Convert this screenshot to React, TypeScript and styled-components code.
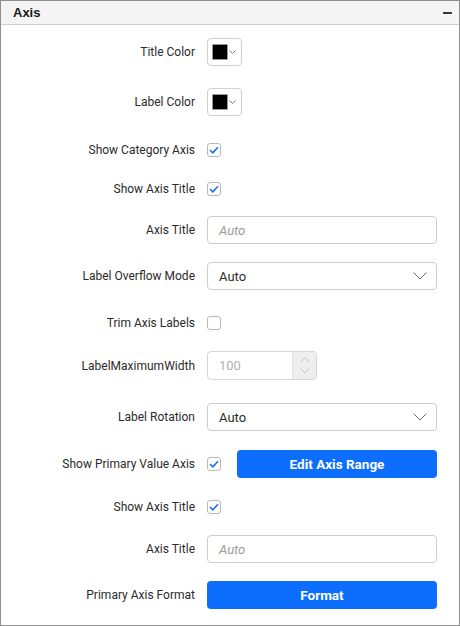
import React from "react";
import styled, { createGlobalStyle } from "styled-components";

const Global = createGlobalStyle`
  html, body { margin: 0; padding: 0; background: #ffffff; }
  * { box-sizing: border-box; }
  body { font-family: Roboto, "Noto Sans", Arial, sans-serif; }
`;

const Panel = styled.div`
  width: 460px;
  height: 626px;
  border: 1px solid #8f8f8f;
  background: #ffffff;
  display: flex;
  flex-direction: column;
  overflow: hidden;
`;

const Header = styled.div`
  height: 24px;
  flex: none;
  background: #f4f4f4;
  border-bottom: 1px solid #cdcdcd;
  display: flex;
  align-items: center;
  justify-content: space-between;
  padding: 0 7px 0 12px;
`;

const HeaderTitle = styled.span`
  font-family: "Liberation Sans", Arial, sans-serif;
  font-weight: 700;
  font-size: 13px;
  color: #1a1a1a;
`;

const Collapse = styled.span`
  width: 9px;
  height: 2px;
  background: #3a3a3a;
  margin-top: 1px;
`;

const Body = styled.div`
  display: flex;
  flex-direction: column;
`;

const Row = styled.div<{ $gap: number; $h?: number }>`
  display: flex;
  align-items: center;
  height: ${(p) => p.$h ?? 28}px;
  margin-top: ${(p) => p.$gap}px;
`;

const Label = styled.div`
  width: 194px;
  flex: none;
  text-align: right;
  font-size: 12px;
  color: #2b2b2b;
  white-space: nowrap;
`;

const Controls = styled.div`
  margin-left: 12px;
  display: flex;
  align-items: center;
  gap: 16px;
  height: 100%;
`;

const ColorBox = styled.div`
  width: 35px;
  height: 28px;
  border: 1px solid #cfcfcf;
  border-radius: 4px;
  display: flex;
  align-items: center;
  padding-left: 4px;
  gap: 1px;
`;

const Swatch = styled.div`
  width: 16px;
  height: 16px;
  background: #000000;
  border: 1px solid #9a9a9a;
  border-radius: 1px;
`;

const CheckBox = styled.div`
  width: 14px;
  height: 14px;
  border: 1px solid #b9b9b9;
  border-radius: 3px;
  display: flex;
  align-items: center;
  justify-content: center;
  background: #ffffff;
`;

const TextBox = styled.div<{ $w?: number }>`
  width: ${(p) => p.$w ?? 230}px;
  height: 28px;
  border: 1px solid #cdcdcd;
  border-radius: 4px;
  display: flex;
  align-items: center;
  padding-left: 11px;
  font-size: 13px;
`;

const SelectBox = styled(TextBox)`
  padding-right: 0;
`;

const Placeholder = styled.span`
  font-style: italic;
  color: #9a9a9a;
`;

const Value = styled.span`
  color: #2b2b2b;
  flex: 1;
`;

const DropArrow = styled.div`
  width: 30px;
  height: 100%;
  display: flex;
  align-items: center;
  justify-content: center;
  margin-right: 1px;
`;

const Numeric = styled.div`
  width: 110px;
  height: 29px;
  border: 1px solid #d6d6d6;
  border-radius: 4px;
  display: flex;
  align-items: stretch;
  overflow: hidden;
  font-size: 13px;
`;

const NumValue = styled.div`
  flex: 1;
  display: flex;
  align-items: center;
  padding-left: 11px;
  color: #b0b0b0;
`;

const Spinner = styled.div`
  width: 24px;
  background: #eeeeee;
  border-left: 1px solid #e2e2e2;
  display: flex;
  flex-direction: column;
  align-items: center;
  justify-content: center;
  gap: 5px;
`;

const PrimaryButton = styled.button<{ $w: number }>`
  width: ${(p) => p.$w}px;
  height: 28px;
  border: none;
  border-radius: 4px;
  background: #0d6efd;
  color: #ffffff;
  font-family: Roboto, Arial, sans-serif;
  font-weight: 700;
  font-size: 13.5px;
  padding: 0;
  cursor: pointer;
`;

const Chevron = ({ size = 12, color = "#6b6b6b", up = false }: { size?: number; color?: string; up?: boolean }) => (
  <svg width={size} height={size / 2 + 1} viewBox={`0 0 ${size} ${size / 2 + 1}`}>
    <polyline
      points={up ? `0.5,${size / 2 + 0.5} ${size / 2},0.5 ${size - 0.5},${size / 2 + 0.5}` : `0.5,0.5 ${size / 2},${size / 2} ${size - 0.5},0.5`}
      fill="none"
      stroke={color}
      strokeWidth="1"
    />
  </svg>
);

const Check = () => (
  <svg width="10" height="8" viewBox="0 0 10 8">
    <polyline points="1,4 3.8,6.8 9,1.2" fill="none" stroke="#1a6ef5" strokeWidth="1.6" />
  </svg>
);

const ColorPicker = () => (
  <ColorBox>
    <Swatch />
    <Chevron size={7} color="#777" />
  </ColorBox>
);

const Dropdown = ({ value }: { value: string }) => (
  <SelectBox>
    <Value>{value}</Value>
    <DropArrow>
      <Chevron size={14} color="#6e6e6e" />
    </DropArrow>
  </SelectBox>
);

export default function App() {
  return (
    <>
      <Global />
      <Panel>
        <Header>
          <HeaderTitle>Axis</HeaderTitle>
          <Collapse />
        </Header>
        <Body>
          <Row $gap={13}>
            <Label>Title Color</Label>
            <Controls><ColorPicker /></Controls>
          </Row>
          <Row $gap={22}>
            <Label>Label Color</Label>
            <Controls><ColorPicker /></Controls>
          </Row>
          <Row $gap={20}>
            <Label>Show Category Axis</Label>
            <Controls><CheckBox><Check /></CheckBox></Controls>
          </Row>
          <Row $gap={11}>
            <Label>Show Axis Title</Label>
            <Controls><CheckBox><Check /></CheckBox></Controls>
          </Row>
          <Row $gap={13}>
            <Label>Axis Title</Label>
            <Controls><TextBox><Placeholder>Auto</Placeholder></TextBox></Controls>
          </Row>
          <Row $gap={18}>
            <Label>Label Overflow Mode</Label>
            <Controls><Dropdown value="Auto" /></Controls>
          </Row>
          <Row $gap={19}>
            <Label>Trim Axis Labels</Label>
            <Controls><CheckBox /></Controls>
          </Row>
          <Row $gap={14} $h={29}>
            <Label>LabelMaximumWidth</Label>
            <Controls>
              <Numeric>
                <NumValue>100</NumValue>
                <Spinner>
                  <Chevron size={10} color="#c4c4c4" up />
                  <Chevron size={10} color="#c4c4c4" />
                </Spinner>
              </Numeric>
            </Controls>
          </Row>
          <Row $gap={23}>
            <Label>Label Rotation</Label>
            <Controls><Dropdown value="Auto" /></Controls>
          </Row>
          <Row $gap={19}>
            <Label>Show Primary Value Axis</Label>
            <Controls>
              <CheckBox><Check /></CheckBox>
              <PrimaryButton $w={200}>Edit Axis Range</PrimaryButton>
            </Controls>
          </Row>
          <Row $gap={15}>
            <Label>Show Axis Title</Label>
            <Controls><CheckBox><Check /></CheckBox></Controls>
          </Row>
          <Row $gap={14}>
            <Label>Axis Title</Label>
            <Controls><TextBox><Placeholder>Auto</Placeholder></TextBox></Controls>
          </Row>
          <Row $gap={18}>
            <Label>Primary Axis Format</Label>
            <Controls><PrimaryButton $w={230}>Format</PrimaryButton></Controls>
          </Row>
        </Body>
      </Panel>
    </>
  );
}
